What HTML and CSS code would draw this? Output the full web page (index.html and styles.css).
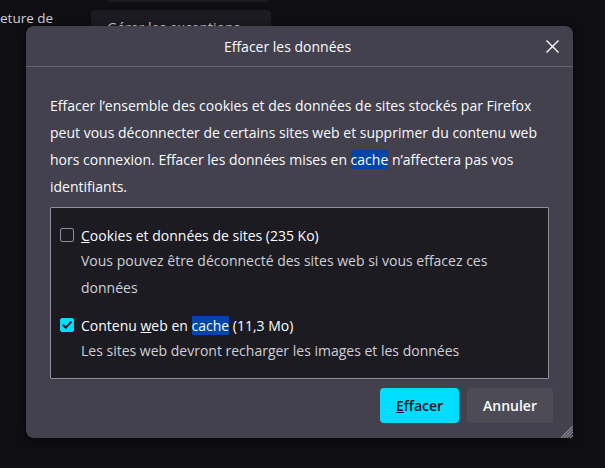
FILE: index.html
```html
<!DOCTYPE html>
<html lang="fr">
<head>
<meta charset="utf-8">
<link rel="stylesheet" href="styles.css">
</head>
<body>
<div class="page">
  <div class="bg-row">
    <span class="bg-text">eture de</span>
    <span class="bg-button">Gérer les exceptions</span>
  </div>
  <div class="bg-topbox"></div>
</div>

<div class="dialog">
  <div class="dialog-header">
    <span class="dialog-title">Effacer les données</span>
    <svg class="close" width="13" height="13" viewBox="0 0 13 13"><path d="M0.5 0.5L12.5 12.5M12.5 0.5L0.5 12.5" stroke="#fbfbfe" stroke-width="1.4" fill="none"/></svg>
  </div>
  <div class="dialog-body">
    <p class="intro">Effacer l’ensemble des cookies et des données de sites stockés par Firefox peut vous déconnecter de certains sites web et supprimer du contenu web hors connexion. Effacer les données mises en <span class="hl">cache</span> n’affectera pas vos identifiants.</p>
    <div class="options">
      <div class="option">
        <div class="opt-row"><span class="checkbox"></span><span class="opt-label"><u>C</u>ookies et données de sites (235 Ko)</span></div>
        <div class="opt-desc">Vous pouvez être déconnecté des sites web si vous effacez ces données</div>
      </div>
      <div class="option">
        <div class="opt-row"><span class="checkbox checked"><svg width="14" height="14" viewBox="0 0 14 14"><path d="M3.3 7.2L5.8 9.7L10.8 4.2" stroke="#15141a" stroke-width="2" fill="none" stroke-linecap="round" stroke-linejoin="round"/></svg></span><span class="opt-label">Contenu <u>w</u>eb en <span class="hl">cache</span> (11,3 Mo)</span></div>
        <div class="opt-desc">Les sites web devront recharger les images et les données</div>
      </div>
    </div>
  </div>
  <div class="dialog-footer">
    <button class="btn btn-primary"><u>E</u>ffacer</button>
    <button class="btn btn-secondary">Annuler</button>
  </div>
  <svg class="grip" width="13" height="13" viewBox="0 0 13 13"><path d="M13 1L1 13M13 4L4 13M13 7L7 13M13 10L10 13" stroke="#8a8994" stroke-width="1.2"/></svg>
</div>
</body>
</html>
```

FILE: styles.css
```css
html, body {
  margin: 0;
  padding: 0;
  background: #0f0e13;
  width: 605px;
  height: 468px;
  overflow: hidden;
  font-family: "Open Sans", "Noto Sans", sans-serif;
  color: #fbfbfe;
}

.page {
  position: relative;
  height: 468px;
}

.bg-row {
  display: flex;
  align-items: flex-start;
  padding-top: 10px;
}

.bg-text {
  font-size: 13.5px;
  line-height: 16px;
  color: #d0d0d6;
  width: 91px;
}

.bg-button {
  display: block;
  background: #1c1b22;
  border-radius: 4px;
  width: 164px;
  padding: 8px 0 0 16px;
  height: 30px;
  font-size: 14px;
  color: #d0d0d6;
}

.bg-topbox {
  position: absolute;
  left: 107px;
  top: -6px;
  width: 163px;
  height: 8px;
  background: #1c1b22;
  border-radius: 4px;
}

.dialog {
  position: absolute;
  left: 26px;
  top: 26px;
  width: 547px;
  height: 412px;
  background: #42414d;
  border-radius: 8px;
  box-shadow: 0 2px 8px rgba(0,0,0,0.5);
  display: flex;
  flex-direction: column;
}

.dialog-header {
  height: 40px;
  border-bottom: 1px solid #64636c;
  display: flex;
  align-items: center;
  justify-content: center;
  position: relative;
}

.dialog-title {
  font-size: 14px;
  margin-right: 24px;
}

.close {
  position: absolute;
  right: 14px;
  top: 14px;
}

.dialog-body {
  padding: 25px 24px 0 24px;
}

.intro {
  margin: 0;
  font-size: 14px;
  line-height: 27px;
}

.hl {
  background: #0046a8;
}

.options {
  margin-top: 7px;
  background: #1c1b22;
  border: 1px solid #8f8f9d;
  border-radius: 1px;
  padding: 15px 9px 14px 9px;
  display: flex;
  flex-direction: column;
  gap: 12px;
}

.opt-row {
  display: flex;
  align-items: center;
  height: 24px;
}

.checkbox {
  width: 14px;
  height: 14px;
  box-sizing: border-box;
  border: 1px solid #8f8f9d;
  border-radius: 2px;
  margin-right: 7px;
  flex: none;
  display: flex;
}

.checkbox.checked {
  background: #00ddff;
  border-color: #00ddff;
}

.checkbox.checked svg {
  margin: -1px;
}

.opt-label {
  font-size: 14px;
}

.opt-desc {
  margin-left: 21px;
  font-size: 14px;
  line-height: 27px;
  color: #cfcfd8;
  max-width: 420px;
}

.dialog-footer {
  margin-top: 9px;
  padding-right: 20px;
  display: flex;
  justify-content: flex-end;
  gap: 8px;
}

.btn {
  height: 35px;
  border: none;
  border-radius: 4px;
  font-family: "Open Sans", "Noto Sans", sans-serif;
  font-size: 14px;
  font-weight: 600;
  padding: 0;
}

.btn-primary {
  width: 79px;
  background: #00ddff;
  color: #15141a;
}

.btn-secondary {
  width: 86px;
  background: #4c4b56;
  color: #fbfbfe;
}

.grip {
  position: absolute;
  right: 0;
  bottom: 0;
}
```
